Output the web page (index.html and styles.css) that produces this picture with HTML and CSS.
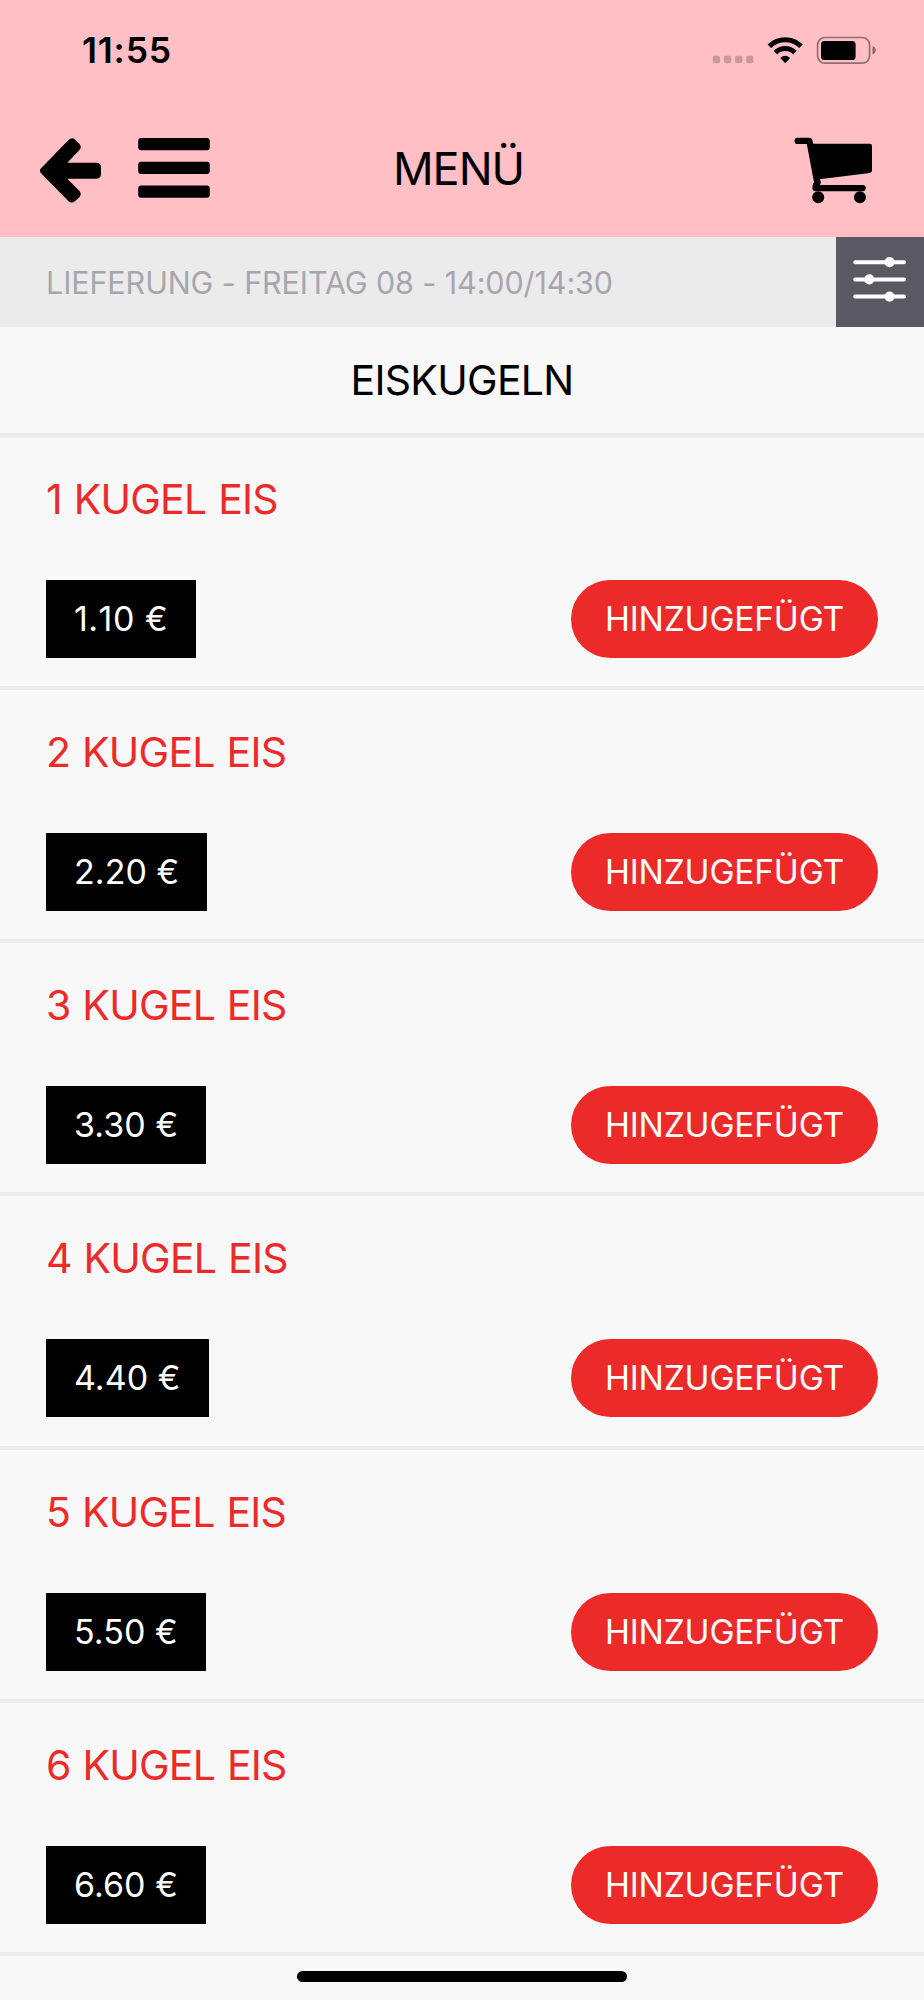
FILE: index.html
```html
<!DOCTYPE html>
<html lang="de">
<head>
<meta charset="utf-8">
<title>Menü</title>
<link rel="stylesheet" href="styles.css">
</head>
<body>
<header class="header">
  <div class="status">
    <span class="time">11:55</span>
    <svg class="status-icons" viewBox="712 36 165 29" width="165" height="29">
      <g fill="#000" fill-opacity=".2"><rect x="712.7" y="55.8" width="7.4" height="7.4" rx="2"/><rect x="723.8" y="55.8" width="7.4" height="7.4" rx="2"/><rect x="735" y="55.8" width="7.4" height="7.4" rx="2"/><rect x="746.1" y="55.8" width="7.4" height="7.4" rx="2"/></g>
      <g fill="none" stroke="#000" stroke-width="5"><path d="M769.4 46.2A22.5 22.5 0 0 1 801 46.2"/><path d="M775.5 52.6A13.8 13.8 0 0 1 794.9 52.6"/></g>
      <path d="M780.3 58Q785.2 53.7 790.1 58L785.9 62.4Q785.2 63 784.5 62.4Z"/>
      <rect x="817.6" y="37.5" width="52" height="25.7" rx="7.4" fill="none" stroke="#000" stroke-opacity=".42" stroke-width="1.7"/>
      <rect x="821" y="41" width="34.6" height="19" rx="3.6"/>
      <path d="M872.5 46Q875.8 47.3 875.8 50.2T872.5 54.6Z" fill-opacity=".45"/>
    </svg>
  </div>
  <nav class="nav">
    <div class="nav-left">
      <svg viewBox="0 0 61 65" width="61" height="65"><path d="M.8 30.5L28.5 2Q31.8-1 35 1.5L39.5 6Q42 9 39.5 12L27.3 24.7H56Q61 24.7 61 29.5V36Q61 40.7 56 40.7H27.3L39.5 53Q42 56 39.5 59L35 63.2Q31.8 66 28.5 63.2L.8 35Q-1 32.7.8 30.5Z"/></svg>
      <svg class="burger" viewBox="0 0 72 60" width="72" height="60"><rect x=".2" width="71.6" height="12.2" rx="3"/><rect x=".2" y="23.8" width="71.6" height="12.2" rx="3"/><rect x=".2" y="47.6" width="71.6" height="12.2" rx="3"/></svg>
    </div>
    <h1 class="nav-title">MENÜ</h1>
    <svg class="cart" viewBox="794 137 79 67" width="79" height="67">
      <path d="M797.6 140.9H809.4L816.8 180.5Q818.5 182.5 816.2 184.5Q815.2 186 815.5 188.1H862.7" fill="none" stroke="#000" stroke-width="6.2" stroke-linecap="round" stroke-linejoin="round"/>
      <path d="M811 143.8H869.8Q872 143.8 872 146V170.6Q872 172.5 870 172.9L819.4 179.2H815Z"/>
      <circle cx="818.2" cy="197.3" r="6"/><circle cx="859.9" cy="197.3" r="6"/>
    </svg>
  </nav>
</header>
<section class="slot">
  <span class="slot-text">LIEFERUNG - FREITAG 08 - 14:00/14:30</span>
  <button class="filter">
    <svg viewBox="853 256 54 47" width="54" height="47"><path d="M855.2 262.2H904M855.2 279.4H904M855.2 296.6H904" stroke="#fff" stroke-width="4" stroke-linecap="round"/><g fill="#fff"><circle cx="889.6" cy="262.2" r="5.1"/><circle cx="869.3" cy="279.4" r="5.1"/><circle cx="889.6" cy="296.6" r="5.1"/></g></svg>
  </button>
</section>
<h2 class="category"><span>EISKUGELN</span></h2>
<main class="list">
  <article class="item"><h3 class="name">1 KUGEL EIS</h3><div class="row"><span class="price one">1.10 €</span><button class="add">HINZUGEFÜGT</button></div></article>
  <article class="item"><h3 class="name">2 KUGEL EIS</h3><div class="row"><span class="price">2.20 €</span><button class="add">HINZUGEFÜGT</button></div></article>
  <article class="item"><h3 class="name">3 KUGEL EIS</h3><div class="row"><span class="price">3.30 €</span><button class="add">HINZUGEFÜGT</button></div></article>
  <article class="item"><h3 class="name">4 KUGEL EIS</h3><div class="row"><span class="price">4.40 €</span><button class="add">HINZUGEFÜGT</button></div></article>
  <article class="item"><h3 class="name">5 KUGEL EIS</h3><div class="row"><span class="price">5.50 €</span><button class="add">HINZUGEFÜGT</button></div></article>
  <article class="item"><h3 class="name">6 KUGEL EIS</h3><div class="row"><span class="price">6.60 €</span><button class="add">HINZUGEFÜGT</button></div></article>
</main>
<footer class="home"><div class="home-bar"></div></footer>
</body>
</html>
```
FILE: styles.css
```css
* { box-sizing: border-box; }
body {
  margin: 0;
  width: 924px;
  height: 2000px;
  overflow: hidden;
  background: #f8f8f8;
  color: #000;
  font-family: Inter, "Liberation Sans", sans-serif;
}
h1, h2, h3 { margin: 0; font-weight: 400; }
button { border: 0; padding: 0; font-family: inherit; }
svg { display: block; flex: none; }

.header { height: 237px; background: #ffbfc4; }
.status {
  display: flex;
  justify-content: space-between;
  align-items: flex-start;
  height: 104px;
  padding: 36px 47px 0 82px;
}
.time { font-size: 35.5px; font-weight: 600; line-height: 30px; letter-spacing: 0.8px; }
.nav {
  display: grid;
  grid-template-columns: 1fr auto 1fr;
  align-items: start;
  padding: 33px 51px 0 40px;
}
.nav-left { display: flex; gap: 37px; padding-top: 1px; }
.nav-title { font-size: 45px; line-height: 60px; letter-spacing: -1px; padding-top: 2px; padding-left: 4px; }
.cart { justify-self: end; }

.slot {
  display: flex;
  justify-content: space-between;
  align-items: center;
  height: 90px;
  padding-left: 46px;
  background: #ebebeb;
}
.slot-text { font-size: 30.5px; color: #a7a6ae; letter-spacing: -0.1px; padding: 1px 0 0 0; white-space: nowrap; }
.filter {
  display: flex;
  justify-content: center;
  width: 88px;
  height: 90px;
  padding-top: 19px;
  background: #5a5962;
}

.category {
  display: flex;
  justify-content: center;
  align-items: center;
  height: 106px;
  font-size: 41px;
  letter-spacing: -0.7px;
}
.item {
  height: 253.17px;
  padding: 41px 46px 0;
  border-top: 4px solid #ebebeb;
}
.item:first-child { padding-top: 40px; border-top-width: 5px; }
.name {
  height: 102px;
  font-size: 41px;
  line-height: 42px;
  letter-spacing: -0.75px;
  word-spacing: 1px;
  color: #ec2a2a;
}
.row { display: flex; justify-content: space-between; }
.price {
  height: 78px;
  padding: 0 28px;
  background: #000;
  color: #fff;
  font-size: 34px;
  line-height: 78px;
  letter-spacing: 0.05px;
}
.price.one { font-kerning: none; letter-spacing: 0.5px; }
.add {
  width: 307px;
  height: 78px;
  border-radius: 40px;
  background: #ec2a2a;
  color: #fff;
  font-size: 33.6px;
  line-height: 78px;
  letter-spacing: -0.2px;
}
.home { display: flex; justify-content: center; padding-top: 15px; border-top: 4px solid #ebebeb; }
.home-bar { width: 330px; height: 11px; border-radius: 6px; background: #000; }
```
